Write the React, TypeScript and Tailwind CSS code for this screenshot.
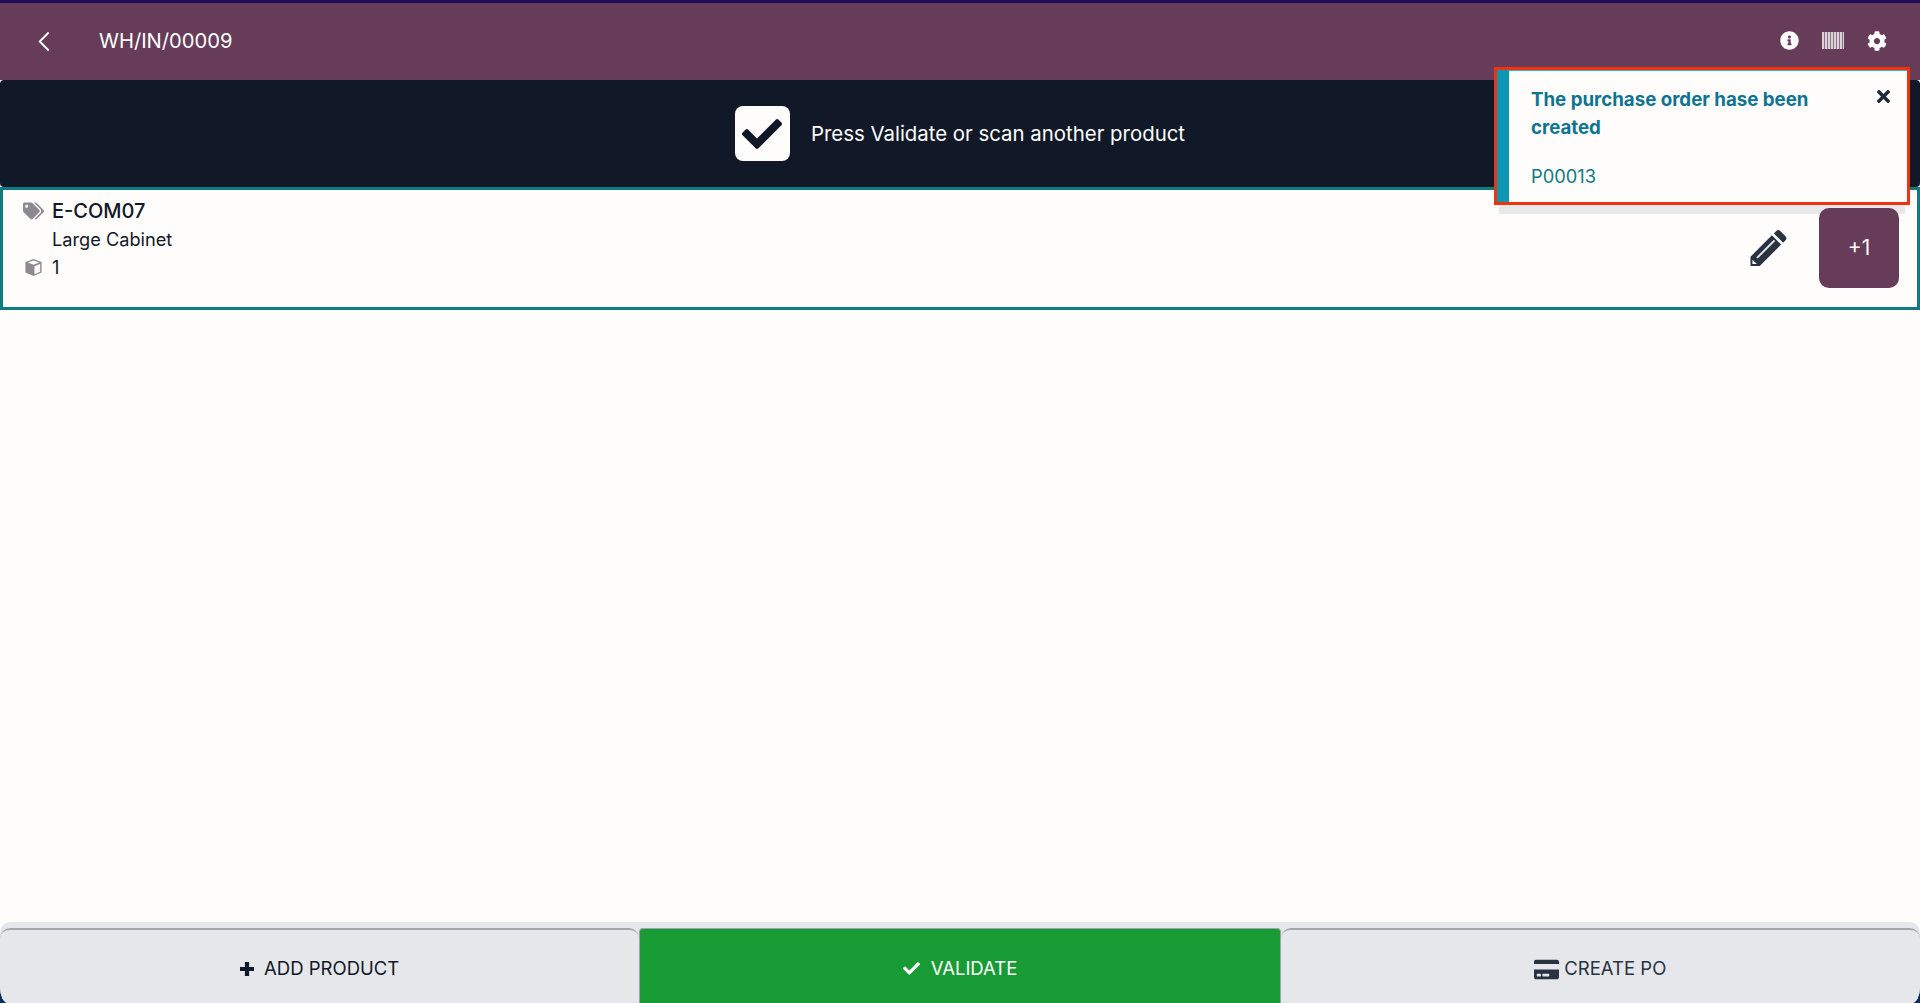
import { FaCheck, FaCog, FaCreditCard, FaInfoCircle, FaTags, FaTimes } from 'react-icons/fa';

export default function App() {
  return (
    <div className="relative h-[1003px] w-full overflow-hidden flex flex-col bg-[#fffdfb] font-['Inter',sans-serif] text-[#111827]">
      {/* Header */}
      <header className="h-[80px] shrink-0 flex items-center border-t-[3px] border-[#1f0a5c] bg-[#663c58] text-white">
        <svg viewBox="0 0 14 24" className="ml-[38px] h-[21px] w-[12px]" fill="none" stroke="currentColor" strokeWidth="2.2">
          <path d="M12.5 1.5 2 12l10.5 10.5" />
        </svg>
        <span className="ml-[49px] text-[20.2px] leading-none mt-[-1px]">WH/IN/00009</span>
        <div className="ml-auto mr-[33px] flex items-center gap-[23px] mt-[-2px]">
          <FaInfoCircle className="text-[19px]" />
          <div className="h-[17px] w-[22px] bg-[repeating-linear-gradient(90deg,#d9d3d7_0,#d9d3d7_2px,#8e7186_2px,#8e7186_3px)]" />
          <FaCog className="text-[20px]" />
        </div>
      </header>

      {/* Status banner */}
      <div className="h-[107px] shrink-0 flex items-center justify-center gap-[21px] rounded-[4px] bg-[#111827] text-white">
        <span className="flex h-[55px] w-[55px] items-center justify-center rounded-[8px] bg-[#fffdfb] text-[#111827]">
          <FaCheck className="text-[40px]" />
        </span>
        <span className="text-[20.4px] pt-[2px]">Press Validate or scan another product</span>
      </div>

      {/* Move line */}
      <div className="h-[123px] shrink-0 flex items-center justify-between border-[3px] border-[#0f7a80] bg-[#fffdfb] pl-[20px] pr-[18px]">
        <div className="self-start pt-[7px]">
          <div className="flex items-center h-[28px]">
            <FaTags className="w-[21px] text-[20px] text-[#8a8a90]" />
            <span className="ml-[8px] text-[20px] font-medium">E-COM07</span>
          </div>
          <div className="ml-[29px] h-[28px] text-[18.2px] leading-[29px]">Large Cabinet</div>
          <div className="flex items-center h-[28px] pt-[1px]">
            <svg viewBox="0 0 20 20" className="w-[21px] h-[19px]">
              <path d="M10 1 18.5 4.2v11L10 19 1.5 15.2v-11z" fill="#8a8a90" />
              <path d="M10 2.6 16 4.8 10 7 4 4.8z" fill="#fffdfb" />
              <path d="M11 8.6 17 6.4v8L11 17z" fill="#fffdfb" />
            </svg>
            <span className="ml-[8px] text-[18.2px]">1</span>
          </div>
        </div>
        <div className="flex items-center gap-[32px] self-start pt-[18px]">
          <svg viewBox="0 0 37 37" className="h-[36px] w-[37px]" fill="#283241">
            <path d="M0 37V27.5L22 5.5 31.5 15 9.5 37zM24 3.5 26.5 1a3 3 0 0 1 4 0L36 6.5a3 3 0 0 1 0 4L33.5 13z" />
            <path d="M6 28 24 10l1.4 1.4L7.4 29.4z" fill="#e8e9eb" />
            <path d="M2 30.5 6.5 35H2z" fill="#fffdfb" />
          </svg>
          <button className="relative z-10 flex h-[80px] w-[80px] items-center justify-center rounded-[10px] bg-[#663c58] text-[21px] text-white">+1</button>
        </div>
      </div>

      <main className="flex-1" />

      {/* Footer actions */}
      <div className="h-[81px] shrink-0 bg-[linear-gradient(#fffdfb_50%,#0c2f5c_50%)]">
        <footer className="h-full flex rounded-t-[10px] rounded-bl-[8px_16px] rounded-br-[8px_16px] overflow-hidden bg-[#e5e7eb] pt-[6px] text-[18.5px]">
          <button className="flex-1 flex items-center justify-center gap-[10px] pt-[5px] rounded-t-[10px] border-t-2 border-[#a5a7ae] bg-[#e5e7eb]">
            <svg viewBox="0 0 12 12" className="h-[14px] w-[14px]" fill="currentColor">
              <path d="M4.2 0h3.6v4.2H12v3.6H7.8V12H4.2V7.8H0V4.2h4.2z" />
            </svg>
            ADD PRODUCT
          </button>
          <button className="flex-1 flex items-center justify-center gap-[11px] pt-[5px] rounded-t-[4px] border-x border-t border-[#9ca3af] bg-[#189b35] text-white">
            <FaCheck className="text-[17px]" />
            VALIDATE
          </button>
          <button className="flex-1 flex items-center justify-center gap-[5px] pt-[5px] rounded-t-[10px] border-t-2 border-[#a5a7ae] bg-[#e5e7eb] text-[#283241]">
            <FaCreditCard className="text-[25px]" />
            CREATE PO
          </button>
        </footer>
      </div>

      {/* Toast */}
      <div className="absolute left-[1494px] top-[67px] h-[138px] w-[416px] flex border-[3px] border-[#f0320f] bg-[#fffdfb] shadow-[0_14px_0_-5px_#e8e8e8]">
        <div className="w-[12px] bg-[#0e97b2]" />
        <div className="flex-1 pl-[22px] pt-[15px] pr-[14px] border-t border-[#2cb6cc] text-[#0e7490]">
          <div className="flex justify-between">
            <p className="w-[300px] text-[18.7px] font-bold leading-[28px]">The purchase order hase been created</p>
            <FaTimes className="mt-[1px] text-[19px] text-[#1f2937]" />
          </div>
          <p className="mt-[20px] text-[18.3px] leading-[28px] text-[#0f7a80]">P00013</p>
        </div>
      </div>
    </div>
  );
}
